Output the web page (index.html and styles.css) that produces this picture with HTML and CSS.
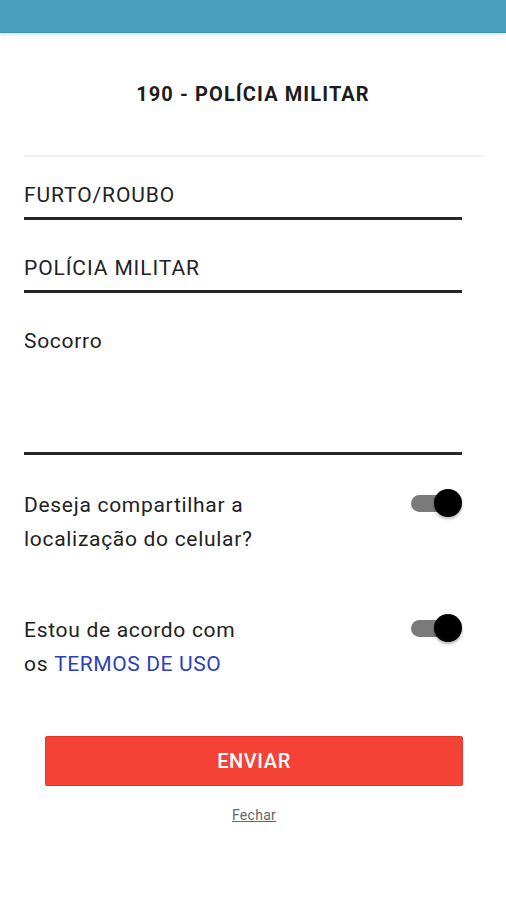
FILE: index.html
```html
<!DOCTYPE html>
<html lang="pt-BR">
<head>
    <meta charset="UTF-8">
    <meta name="viewport" content="width=device-width, initial-scale=1.0">
    <title>190 - Polícia Militar</title>
    <link rel="stylesheet" href="styles.css">
</head>
<body>
    <div class="topbar"></div>

    <div class="header">
        <h1 class="header-title">190 - POLÍCIA MILITAR</h1>
    </div>
    <div class="divider"></div>

    <form class="report-form">
        <div class="field field-first">FURTO/ROUBO</div>
        <div class="field field-second">POLÍCIA MILITAR</div>
        <div class="field field-multiline">Socorro</div>

        <div class="option-row">
            <p class="option-text">Deseja compartilhar a<br>localização do celular?</p>
            <span class="switch"><span class="switch-track"></span><span class="switch-thumb"></span></span>
        </div>

        <div class="option-row option-terms">
            <p class="option-text">Estou de acordo com<br>os <a href="#" class="terms-link">TERMOS DE USO</a></p>
            <span class="switch"><span class="switch-track"></span><span class="switch-thumb"></span></span>
        </div>
    </form>

    <div class="actions">
        <button class="btn-send" type="button">ENVIAR</button>
        <a href="#" class="close-link">Fechar</a>
    </div>
</body>
</html>
```

FILE: styles.css
```css
* {
    margin: 0;
    padding: 0;
    box-sizing: border-box;
}

body {
    font-family: Roboto, "Liberation Sans", sans-serif;
    background: #fff;
    color: #222;
    width: 506px;
}

.topbar {
    height: 33px;
    background: #4a9fbf;
    border-bottom: 1px solid #3f8fad;
    box-shadow: 0 2px 3px rgba(74, 159, 191, 0.25);
}

.header {
    height: 122px;
    display: flex;
    align-items: center;
    justify-content: center;
}

.header-title {
    font-size: 20px;
    font-weight: 700;
    letter-spacing: 1.1px;
    color: #1c1c1c;
}

.divider {
    height: 2px;
    margin: 0 22px 0 24px;
    background: #f2f2f2;
}

.report-form {
    padding: 0 44px 0 24px;
}

.field {
    font-size: 21px;
    line-height: 24px;
    letter-spacing: 0.9px;
    padding-bottom: 10px;
    border-bottom: 3px solid #262626;
}

.field-first {
    margin-top: 26px;
}

.field-second {
    margin-top: 36px;
}

.field-multiline {
    margin-top: 36px;
    padding-bottom: 99px;
    letter-spacing: 0.7px;
}

.option-row {
    display: flex;
    justify-content: space-between;
    align-items: flex-start;
    margin-top: 33px;
}

.option-terms {
    margin-top: 57px;
}

.option-text {
    font-size: 21px;
    line-height: 34px;
    letter-spacing: 0.7px;
}

.terms-link {
    color: #2b3fbd;
    text-decoration: none;
    letter-spacing: 0.6px;
}

.switch {
    position: relative;
    width: 51px;
    height: 28px;
    margin-top: 1px;
    flex-shrink: 0;
}

.switch-track {
    position: absolute;
    left: 0;
    top: 6px;
    width: 46px;
    height: 17px;
    border-radius: 9px;
    background: #7a7a7a;
}

.switch-thumb {
    position: absolute;
    right: 0;
    top: 0;
    width: 28px;
    height: 28px;
    border-radius: 50%;
    background: #000;
    box-shadow: 0 2px 3px rgba(0, 0, 0, 0.3);
}

.actions {
    display: flex;
    flex-direction: column;
    align-items: center;
    padding: 55px 43px 0 45px;
}

.btn-send {
    width: 100%;
    height: 50px;
    border: 1px solid #e8372a;
    border-radius: 2px;
    background: #f44336;
    color: #fff;
    font-family: inherit;
    font-size: 20px;
    font-weight: 500;
    letter-spacing: 0.6px;
}

.close-link {
    margin-top: 21px;
    font-size: 14px;
    line-height: 16px;
    letter-spacing: 0.3px;
    color: #666;
}
```
